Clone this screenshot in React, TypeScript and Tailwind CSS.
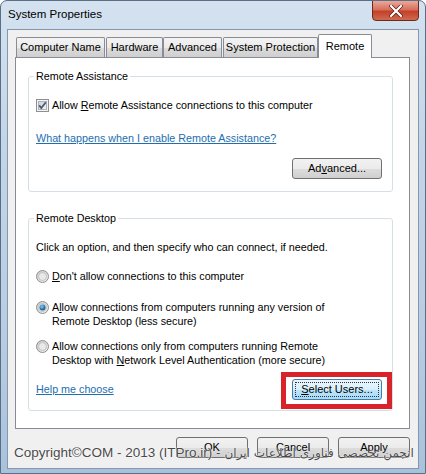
import React from "react";

const font = "font-['Liberation_Sans',Arial,sans-serif]";

function Tab({ label, w, ml, active }: { label: string; w: string; ml: string; active?: boolean }) {
  if (active) {
    return (
      <div
        className={`${w} ${ml} relative z-10 -mb-[1px] h-[24px] flex items-start justify-center pt-[3px] bg-white border border-b-0 border-[#898c95] rounded-t-[2px] text-[11px] text-black`}
      >
        {label}
      </div>
    );
  }
  return (
    <div
      className={`${w} ${ml} h-[20px] flex items-center justify-center bg-[linear-gradient(#f3f3f3,#ebebeb_50%,#dddddd_51%,#cfcfcf)] border border-b-0 border-[#898c95] rounded-t-[2px] text-[11px] text-black`}
    >
      {label}
    </div>
  );
}

function Button({ children, focused, w = "w-[90px]" }: { children: React.ReactNode; focused?: boolean; w?: string }) {
  return (
    <div
      className={`${w} h-[21px] rounded-[3px] border flex items-center justify-center text-[11px] text-black ${
        focused
          ? "border-[#3c7fb1] bg-[linear-gradient(#eaf6fd,#d9f0fc_50%,#bee6fd_51%,#a7d9f5)] p-[2px]"
          : "border-[#707070] bg-[linear-gradient(#f2f2f2,#ebebeb_50%,#dddddd_51%,#cfcfcf)]"
      }`}
    >
      {focused ? (
        <div className="w-full h-full border border-dotted border-[#333] flex items-center justify-center">{children}</div>
      ) : (
        children
      )}
    </div>
  );
}

function Checkbox() {
  return (
    <svg width="13" height="13" viewBox="0 0 13 13" className="shrink-0">
      <defs>
        <linearGradient id="cb" x1="0" y1="0" x2="1" y2="1">
          <stop offset="0" stopColor="#cbcfd5" />
          <stop offset="1" stopColor="#f6f6f6" />
        </linearGradient>
      </defs>
      <rect x="0.5" y="0.5" width="12" height="12" fill="#f4f4f4" stroke="#8e8f8f" />
      <rect x="2.5" y="2.5" width="8" height="8" fill="url(#cb)" stroke="#b0b4ba" />
      <path d="M3.2 6.4 L5.3 9 L9.8 3.2" fill="none" stroke="#4a5a7a" strokeWidth="1.8" />
    </svg>
  );
}

function Radio({ checked }: { checked?: boolean }) {
  return (
    <svg width="13" height="13" viewBox="0 0 13 13" className="shrink-0">
      <defs>
        <linearGradient id="rg" x1="0" y1="0" x2="1" y2="1">
          <stop offset="0" stopColor="#c7c9cc" />
          <stop offset="1" stopColor="#f3f3f3" />
        </linearGradient>
        <radialGradient id="rd" cx="0.4" cy="0.35" r="0.7">
          <stop offset="0" stopColor="#8fd0f5" />
          <stop offset="0.6" stopColor="#2a7bb8" />
          <stop offset="1" stopColor="#1b4f7c" />
        </radialGradient>
      </defs>
      <circle cx="6.5" cy="6.5" r="6" fill="url(#rg)" stroke="#8e8f8f" />
      <circle cx="6.5" cy="6.5" r="4" fill="#e9e9e9" stroke="#b8b8b8" strokeWidth="0.8" />
      {checked && <circle cx="6.5" cy="6.5" r="3" fill="url(#rd)" />}
    </svg>
  );
}

export default function App() {
  return (
    <div
      className={`${font} relative w-[426px] h-[474px] overflow-hidden rounded-t-[7px] border border-[#5a6e86] bg-[linear-gradient(180deg,#d4e2f0,#c3d5e8_30%,#b8cde3_70%,#a9c2dc)]`}
    >
      {/* title bar */}
      <div className="h-[28px] flex items-center pl-[7px] text-[11.5px] text-black">System Properties</div>
      <div className="absolute right-[6px] top-[-1px] w-[47px] h-[21px] rounded-b-[4px] border border-[#6b2a20] bg-[linear-gradient(#e9a99b,#d7705c_45%,#c4412a_55%,#d06a4e)] flex items-center justify-center">
        <svg width="14" height="12" viewBox="0 0 14 12">
          <path d="M2 1 L12 11 M12 1 L2 11" stroke="#5a1f18" strokeWidth="3.6" strokeLinecap="round" />
          <path d="M2 1 L12 11 M12 1 L2 11" stroke="#ffffff" strokeWidth="2.2" strokeLinecap="round" />
        </svg>
      </div>

      {/* client area */}
      <div className="mx-[6px] h-[440px] bg-[#f0f0f0] border border-[#8797ab] pl-[7px] pr-[8px]">
        <div className="h-[27px] pt-[5px] flex items-end">
          <Tab label="Computer Name" w="w-[89px]" ml="ml-[1px]" />
          <Tab label="Hardware" w="w-[57px]" ml="ml-[1px]" />
          <Tab label="Advanced" w="w-[59px]" ml="ml-0" />
          <Tab label="System Protection" w="w-[95px]" ml="ml-[1px]" />
          <Tab label="Remote" w="w-[54px]" ml="ml-0" active />
        </div>

        <div className="h-[372px] bg-white border border-[#898c95] pt-[11px] text-[10.75px] text-black">
          <fieldset className="ml-[12px] mr-[16px] border border-[#d5dfe5] rounded-[3px] pl-[7px] pr-[10px] pb-[12px]">
            <legend className="px-[2px] -ml-[2px] leading-[15px]">Remote Assistance</legend>
            <div className="mt-[14px] h-[15px] flex items-center gap-[3px]">
              <Checkbox />
              <span>
                Allow <u>R</u>emote Assistance connections to this computer
              </span>
            </div>
            <div className="mt-[18px] h-[15px] flex items-center text-[#1e6eb0] underline">
              What happens when I enable Remote Assistance?
            </div>
            <div className="mt-[12px] flex justify-end">
              <Button>
                Ad<u>v</u>anced...
              </Button>
            </div>
          </fieldset>

          <fieldset className="mt-[19px] ml-[12px] mr-[16px] border border-[#d5dfe5] rounded-[3px] pl-[7px] pr-[10px] pb-[10px]">
            <legend className="px-[2px] -ml-[2px] leading-[15px]">Remote Desktop</legend>
            <div className="mt-[14px] h-[15px] flex items-center">
              Click an option, and then specify who can connect, if needed.
            </div>
            <div className="mt-[14px] h-[15px] flex items-center gap-[3px]">
              <Radio />
              <span>
                <u>D</u>on't allow connections to this computer
              </span>
            </div>
            <div className="mt-[16px] flex items-start gap-[3px] leading-[14px]">
              <div className="pt-[1px]">
                <Radio checked />
              </div>
              <span>
                A<u>l</u>low connections from computers running any version of
                <br />
                Remote Desktop (less secure)
              </span>
            </div>
            <div className="mt-[11px] flex items-start gap-[3px] leading-[14px]">
              <div className="pt-[1px]">
                <Radio />
              </div>
              <span>
                Allow connections only from computers running Remote
                <br />
                Desktop with <u>N</u>etwork Level Authentication (more secure)
              </span>
            </div>
            <div className="mt-[12px] flex items-center justify-between">
              <span className="text-[#1e6eb0] underline">Help me choose</span>
              <div className="relative">
                <Button focused>
                  <u>S</u>elect Users...
                </Button>
                <div className="absolute -left-[11px] -top-[7px] -right-[10px] -bottom-[9px] border-[5px] border-[#d8232a]" />
              </div>
            </div>
          </fieldset>
        </div>

        <div className="mt-[8px] flex justify-end gap-[9px]">
          <Button w="w-[72px]">OK</Button>
          <Button w="w-[72px]">Cancel</Button>
          <Button w="w-[72px]">Apply</Button>
        </div>
      </div>

      {/* watermark */}
      <div className="absolute left-[13px] top-[442px] flex items-center gap-[4px] text-[13.5px] text-[#4a4a4a] [text-shadow:0_0_2px_#fff,0_0_1px_#fff] whitespace-nowrap">
        <span>Copyright©COM - 2013 (ITPro.ir) -</span>
        <span dir="rtl" className="font-['DejaVu_Sans',sans-serif] text-[12px]">
          انجمن تخصصی فناوری اطلاعات ایران
        </span>
      </div>
    </div>
  );
}
